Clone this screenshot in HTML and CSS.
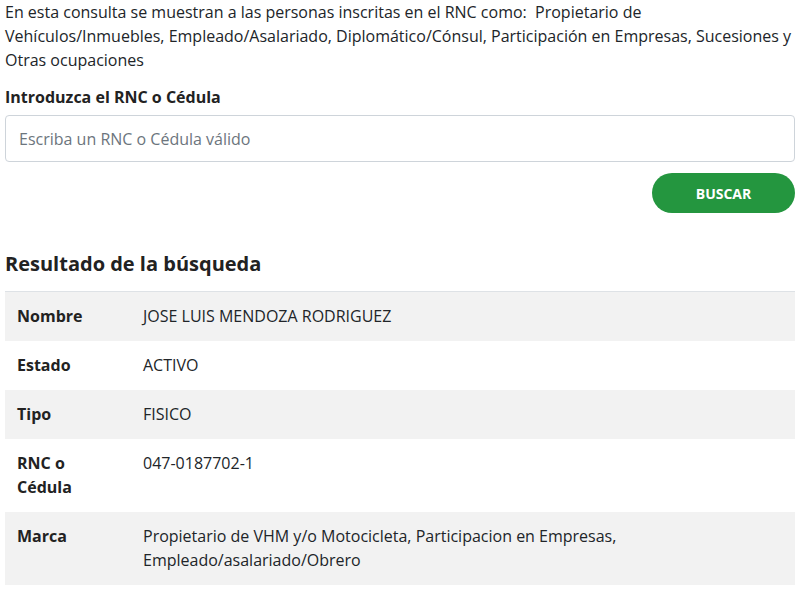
FILE: index.html
```html
<!DOCTYPE html>
<html lang="es">
<head>
<meta charset="utf-8">
<link rel="stylesheet" href="styles.css">
</head>
<body>
<div class="page">
  <p class="intro">En esta consulta se muestran a las personas inscritas en el RNC como:&nbsp; Propietario de Vehículos/Inmuebles, Empleado/Asalariado, Diplomático/Cónsul, Participación en Empresas, Sucesiones y Otras ocupaciones</p>
  <label class="field-label" for="rnc">Introduzca el RNC o Cédula</label>
  <input class="field-input" id="rnc" type="text" placeholder="Escriba un RNC o Cédula válido">
  <div class="actions">
    <button class="btn-search" type="button">BUSCAR</button>
  </div>
  <h2 class="result-title">Resultado de la búsqueda</h2>
  <table class="result-table">
    <tbody>
      <tr><th>Nombre</th><td>JOSE LUIS MENDOZA RODRIGUEZ</td></tr>
      <tr><th>Estado</th><td>ACTIVO</td></tr>
      <tr><th>Tipo</th><td>FISICO</td></tr>
      <tr><th>RNC o Cédula</th><td>047-0187702-1</td></tr>
      <tr><th>Marca</th><td>Propietario de VHM y/o Motocicleta, Participacion en Empresas, Empleado/asalariado/Obrero</td></tr>
    </tbody>
  </table>
</div>
</body>
</html>
```

FILE: styles.css
```css
* { box-sizing: border-box; }
html, body { margin: 0; padding: 0; background: #fff; }
body {
  font-family: "Open Sans", "Liberation Sans", sans-serif;
  font-size: 16px;
  line-height: 24px;
  color: #212529;
}
.page {
  padding: 0 5px;
  display: flex;
  flex-direction: column;
}
.intro {
  margin: 0;
}
.field-label {
  display: block;
  margin-top: 13px;
  font-weight: 700;
  color: #222;
}
.field-input {
  margin-top: 6px;
  width: 100%;
  height: 47px;
  border: 1px solid #ced4da;
  border-radius: 4px;
  padding: 0 13px;
  font-family: inherit;
  font-size: 16px;
  color: #495057;
  background: #fff;
}
.field-input::placeholder { color: #6c757d; opacity: 1; }
.actions {
  display: flex;
  justify-content: flex-end;
  margin-top: 11px;
}
.btn-search {
  width: 143px;
  height: 40px;
  border: none;
  border-radius: 20px;
  background: #24963f;
  color: #fff;
  font-family: inherit;
  font-weight: 700;
  font-size: 14px;
  cursor: pointer;
}
.result-title {
  margin: 39px 0 0;
  font-size: 20px;
  line-height: 24px;
  font-weight: 700;
  color: #222;
}
.result-table {
  margin-top: 15px;
  width: 100%;
  border-collapse: collapse;
  border-top: 1px solid #dee2e6;
}
.result-table th,
.result-table td {
  padding: 12px 12px 13px;
  text-align: left;
  vertical-align: top;
}
.result-table th {
  width: 126px;
  font-weight: 700;
  color: #222;
}
.result-table tr:nth-child(odd) { background: #f2f2f2; }
```
